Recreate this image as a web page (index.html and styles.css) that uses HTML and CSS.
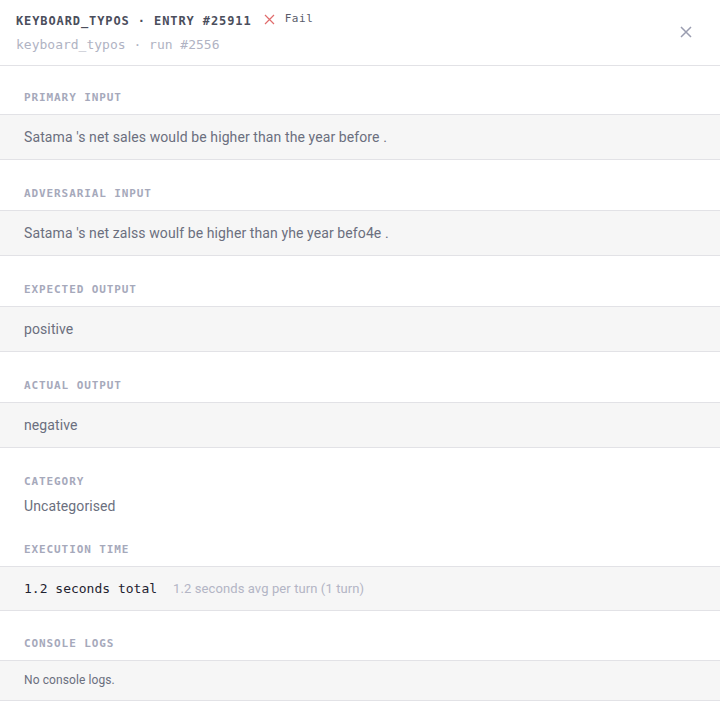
FILE: index.html
```html
<!doctype html>
<html>
<head>
<meta charset="utf-8">
<title>entry #25911</title>
<link rel="stylesheet" href="styles.css">
</head>
<body>
	<div class="panel">
		<div class="head">
			<div class="head-text">
				<div class="title">
					<span>KEYBOARD_TYPOS · ENTRY #25911</span>
					<span class="status">
						<svg width="11" height="11" viewBox="0 0 11 11"><path d="M1 1L10 10M10 1L1 10" stroke="#e06c6c" stroke-width="1.2" fill="none"/></svg>
						Fail
					</span>
				</div>
				<div class="sub">keyboard_typos · run #2556</div>
			</div>
			<div class="close">
				<svg width="12" height="12" viewBox="0 0 12 12"><path d="M1 1L11 11M11 1L1 11" stroke="#9a9db0" stroke-width="1.5" fill="none"/></svg>
			</div>
		</div>

		<div class="sec first">
			<div class="label">PRIMARY INPUT</div>
			<div class="box">Satama 's net sales would be higher than the year before .</div>
		</div>
		<div class="sec">
			<div class="label">ADVERSARIAL INPUT</div>
			<div class="box">Satama 's net zalss woulf be higher than yhe year befo4e .</div>
		</div>
		<div class="sec">
			<div class="label">EXPECTED OUTPUT</div>
			<div class="box">positive</div>
		</div>
		<div class="sec">
			<div class="label">ACTUAL OUTPUT</div>
			<div class="box">negative</div>
		</div>
		<div class="sec">
			<div class="label short">CATEGORY</div>
			<div class="plain">Uncategorised</div>
		</div>
		<div class="sec tight">
			<div class="label">EXECUTION TIME</div>
			<div class="box time">
				<span class="total">1.2 seconds total</span>
				<span class="avg">1.2 seconds avg per turn (1 turn)</span>
			</div>
		</div>
		<div class="sec tight">
			<div class="label">CONSOLE LOGS</div>
			<div class="box logs">No console logs.</div>
		</div>
	</div>
</body>
</html>
```

FILE: styles.css
```css
*{margin:0;padding:0;box-sizing:border-box;}
body{
	background:#fff;
	font-family:"Roboto","Liberation Sans",sans-serif;
	color:#6b6f7e;
}
.head{
	display:flex;
	align-items:flex-start;
	justify-content:space-between;
	height:66px;
	padding:13px 20px 0 16px;
	border-bottom:1px solid #e2e2e6;
}
.title{
	display:flex;
	align-items:center;
	gap:12px;
	font:bold 12px/16px "DejaVu Sans Mono",monospace;
	letter-spacing:0.9px;
	color:#4b4e5c;
}
.status{
	display:flex;
	align-items:center;
	gap:10px;
	font-weight:normal;
	font-size:11px;
	letter-spacing:0.6px;
	color:#5a5d6b;
	margin-top:-4px;
}
.sub{
	margin-top:6px;
	font:13px/20px "DejaVu Sans Mono",monospace;
	color:#b0b3c3;
}
.close{
	align-self:center;
	margin-top:-14px;
	width:28px;
	height:28px;
	display:flex;
	align-items:center;
	justify-content:center;
}
.sec{padding-top:26px;}
.sec.first{padding-top:24px;}
.sec.tight{padding-top:25px;}
.label{
	padding:0 24px;
	margin-bottom:8px;
	font:bold 11px/16px "DejaVu Sans Mono",monospace;
	letter-spacing:0.9px;
	color:#a6a9bb;
}
.label.short{margin-bottom:6px;}
.box{
	background:#f6f6f6;
	border-top:1px solid #e2e2e6;
	border-bottom:1px solid #e2e2e6;
	padding:12px 24px;
	font-size:14px;
	line-height:20px;
	letter-spacing:0.1px;
}
.plain{
	padding:0 24px;
	font-size:14px;
	line-height:21px;
	letter-spacing:0.1px;
}
.box.time{
	padding:11px 24px;
	display:flex;
	align-items:baseline;
	gap:16px;
}
.total{
	font:13px/21px "DejaVu Sans Mono",monospace;
	letter-spacing:0;
	color:#1f2230;
}
.avg{
	font-size:13px;
	color:#b3b5c5;
}
.box.logs{
	padding:10px 24px;
	font-size:12px;
	line-height:19px;
}
```
